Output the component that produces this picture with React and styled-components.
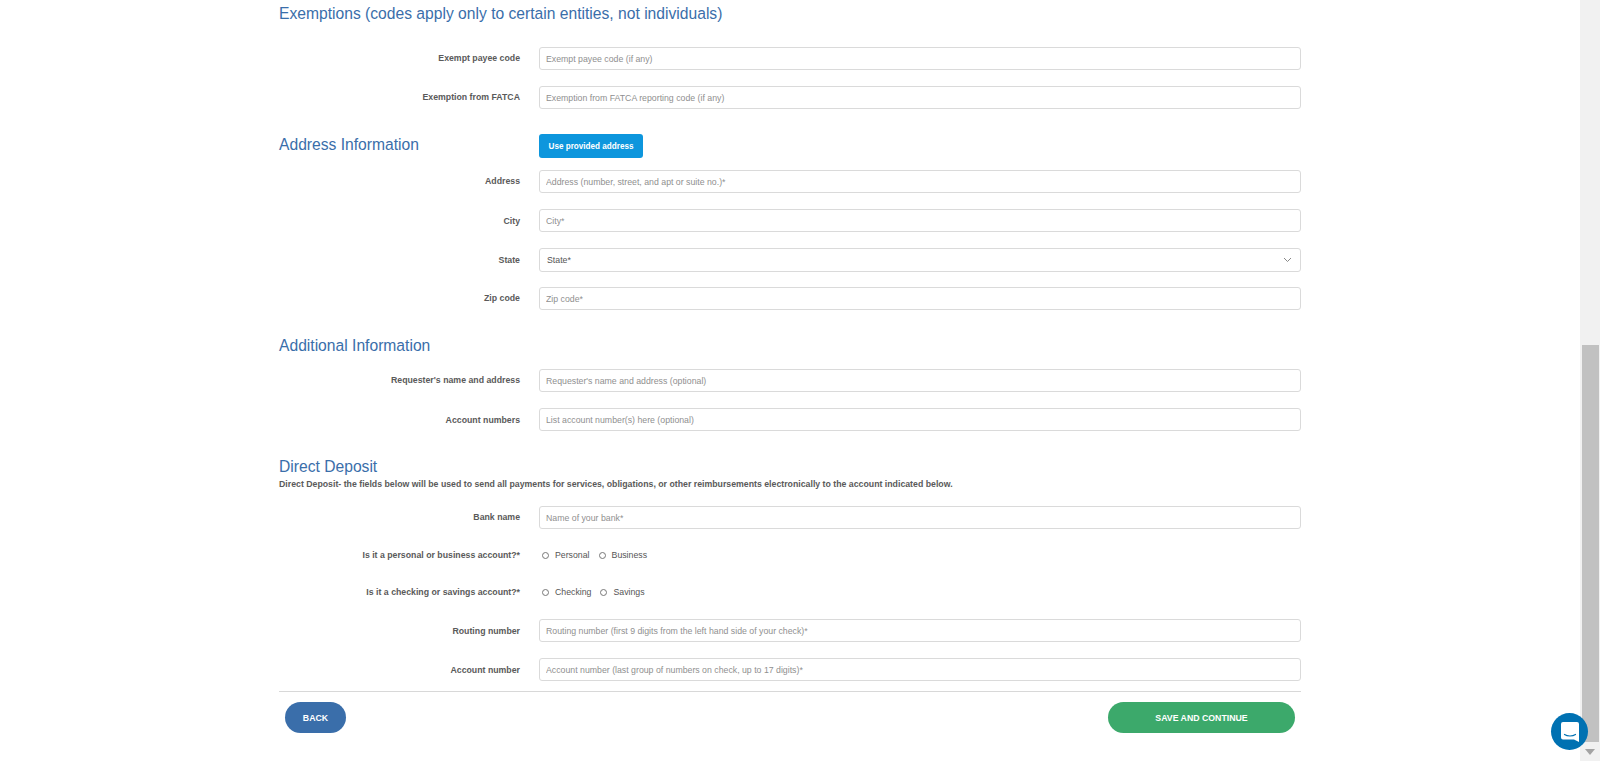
import React from "react";
import styled, { createGlobalStyle } from "styled-components";

const Global = createGlobalStyle`
  html, body { margin: 0; padding: 0; height: 761px; overflow: hidden; background: #fff; }
  body { font-family: "Liberation Sans", Arial, sans-serif; }
  ::placeholder { color: #8f8f8f; opacity: 1; }
`;

const Page = styled.div`
  display: flex;
  width: 1600px;
  height: 761px;
  overflow: hidden;
  position: relative;
`;
const Main = styled.main`
  flex: 1;
  padding-left: 279px;
`;
const Form = styled.form`
  width: 1022px;
  display: flex;
  flex-direction: column;
`;
const Heading = styled.h2`
  margin: 0;
  font-size: 15.65px;
  line-height: 20px;
  font-weight: 400;
  color: #3a6eaa;
`;
const Section = styled.section`
  display: flex;
  flex-direction: column;
  gap: ${(p) => p.$gap ?? 16}px;
  padding-top: ${(p) => p.$top}px;
`;
const Row = styled.div`
  display: grid;
  grid-template-columns: 241px 1fr;
  column-gap: 19px;
  align-items: center;
  height: ${(p) => p.$h ?? 23}px;
`;
const HeadRow = styled.div`
  display: grid;
  grid-template-columns: 260px 1fr;
  align-items: center;
  height: 24px;
  ${Heading} { margin-top: -2px; }
`;
const Label = styled.label`
  font-size: 8.75px;
  font-weight: 700;
  color: #5a5a5a;
  text-align: right;
  margin-top: ${(p) => (p.$up ? -2 : 0)}px;
`;
const Input = styled.input`
  box-sizing: border-box;
  width: 100%;
  height: 23px;
  border: 1px solid #dadada;
  border-radius: 3px;
  padding: 0 6px;
  font: 8.75px "Liberation Sans", Arial, sans-serif;
  color: #555;
  background: #fff;
`;
const SelectBox = styled.div`
  box-sizing: border-box;
  height: 24px;
  border: 1px solid #dadada;
  border-radius: 3px;
  padding: 0 8px 0 7px;
  font-size: 8.75px;
  color: #555;
  display: flex;
  align-items: center;
  justify-content: space-between;
`;
const FillButton = styled.button`
  width: 104px;
  height: 24px;
  border: 0;
  border-radius: 3px;
  padding: 0;
  background: #0d96dd;
  color: #fff;
  font: 700 8.15px "Liberation Sans", Arial, sans-serif;
`;
const Note = styled.p`
  margin: 0;
  font-size: 8.75px;
  line-height: 11px;
  font-weight: 700;
  color: #5a5a5a;
`;
const Radios = styled.div`
  display: flex;
  align-items: center;
  padding-left: 3px;
  gap: 9px;
`;
const Radio = styled.span`
  display: flex;
  align-items: center;
  gap: 6px;
  font-size: 8.75px;
  color: #555;
  &::before {
    content: "";
    box-sizing: border-box;
    width: 7px;
    height: 7px;
    border: 1px solid #777;
    border-radius: 50%;
  }
`;
const Rule = styled.hr`
  width: 100%;
  height: 1px;
  margin: 10px 0 0;
  border: 0;
  background: #d8d8d8;
`;
const Actions = styled.div`
  display: flex;
  justify-content: space-between;
  padding: 10px 6px 0;
`;
const Pill = styled.button`
  width: ${(p) => p.$w}px;
  height: 31px;
  border: 0;
  border-radius: 16px;
  padding: 0;
  background: ${(p) => p.$bg};
  color: #fff;
  font: 700 8.75px "Liberation Sans", Arial, sans-serif;
`;
const ScrollTrack = styled.aside`
  width: 20px;
  height: 761px;
  box-sizing: border-box;
  background: #f1f1f1;
  display: flex;
  flex-direction: column;
  align-items: center;
  padding-top: 345px;
`;
const Thumb = styled.div`
  width: 17px;
  margin-left: 1px;
  height: 397px;
  background: #c1c1c1;
`;
const ArrowBox = styled.div`
  height: 19px;
  display: flex;
  align-items: center;
  justify-content: center;
`;
const Chat = styled.div`
  position: absolute;
  left: 1551px;
  top: 713px;
  width: 37px;
  height: 37px;
  border-radius: 50%;
  background: #0071b2;
  display: flex;
  align-items: center;
  justify-content: center;
`;

const Field = ({ label, placeholder, up }) => (
  <Row>
    <Label $up={up}>{label}</Label>
    <Input placeholder={placeholder} />
  </Row>
);

export default function App() {
  return (
    <Page>
      <Global />
      <Main>
        <Form>
          <Section $top={4}>
            <Heading>Exemptions (codes apply only to certain entities, not individuals)</Heading>
          </Section>
          <Section $top={23}>
            <Field up label="Exempt payee code" placeholder="Exempt payee code (if any)" />
            <Field up label="Exemption from FATCA" placeholder="Exemption from FATCA reporting code (if any)" />
          </Section>
          <Section $top={25}>
            <HeadRow>
              <Heading>Address Information</Heading>
              <FillButton type="button">Use provided address</FillButton>
            </HeadRow>
          </Section>
          <Section $top={12}>
            <Field up label="Address" placeholder="Address (number, street, and apt or suite no.)*" />
            <Field label="City" placeholder="City*" />
            <Row>
              <Label>State</Label>
              <SelectBox>
                State*
                <svg width="9" height="6" viewBox="0 0 9 6" fill="none" stroke="#888" strokeWidth="1">
                  <path d="M1 1l3.5 3.5L8 1" />
                </svg>
              </SelectBox>
            </Row>
            <Field up label="Zip code" placeholder="Zip code*" />
          </Section>
          <Section $top={26}>
            <Heading>Additional Information</Heading>
          </Section>
          <Section $top={13}>
            <Field up label="Requester's name and address" placeholder="Requester's name and address (optional)" />
            <Field label="Account numbers" placeholder="List account number(s) here (optional)" />
          </Section>
          <Section $top={26} $gap={2}>
            <Heading>Direct Deposit</Heading>
            <Note>
              Direct Deposit- the fields below will be used to send all payments for services, obligations, or other reimbursements electronically to the account indicated below.
            </Note>
          </Section>
          <Section $top={16} $gap={15}>
            <Field up label="Bank name" placeholder="Name of your bank*" />
            <Row $h={22}>
              <Label>Is it a personal or business account?*</Label>
              <Radios>
                <Radio>Personal</Radio>
                <Radio>Business</Radio>
              </Radios>
            </Row>
            <Row $h={22}>
              <Label>Is it a checking or savings account?*</Label>
              <Radios>
                <Radio>Checking</Radio>
                <Radio>Savings</Radio>
              </Radios>
            </Row>
          </Section>
          <Section $top={16}>
            <Field label="Routing number" placeholder="Routing number (first 9 digits from the left hand side of your check)*" />
            <Field label="Account number" placeholder="Account number (last group of numbers on check, up to 17 digits)*" />
          </Section>
          <Rule />
          <Actions>
            <Pill type="button" $w={61} $bg="#3a6eaa">BACK</Pill>
            <Pill type="button" $w={187} $bg="#3ca96b">SAVE AND CONTINUE</Pill>
          </Actions>
        </Form>
      </Main>
      <ScrollTrack>
        <Thumb />
        <ArrowBox>
          <svg width="10" height="6" viewBox="0 0 10 6"><path d="M0 0h10L5 6z" fill="#a3a3a3" /></svg>
        </ArrowBox>
      </ScrollTrack>
      <Chat>
        <svg width="20" height="22" viewBox="0 0 20 22">
          <path d="M3 1h14a2 2 0 0 1 2 2v18l-5-2.5H3a2 2 0 0 1-2-2V3a2 2 0 0 1 2-2z" fill="#fff" />
          <path d="M4.5 13.5c3 2 8 2 11 0" fill="none" stroke="#0071b2" strokeWidth="1.2" strokeLinecap="round" />
        </svg>
      </Chat>
    </Page>
  );
}
